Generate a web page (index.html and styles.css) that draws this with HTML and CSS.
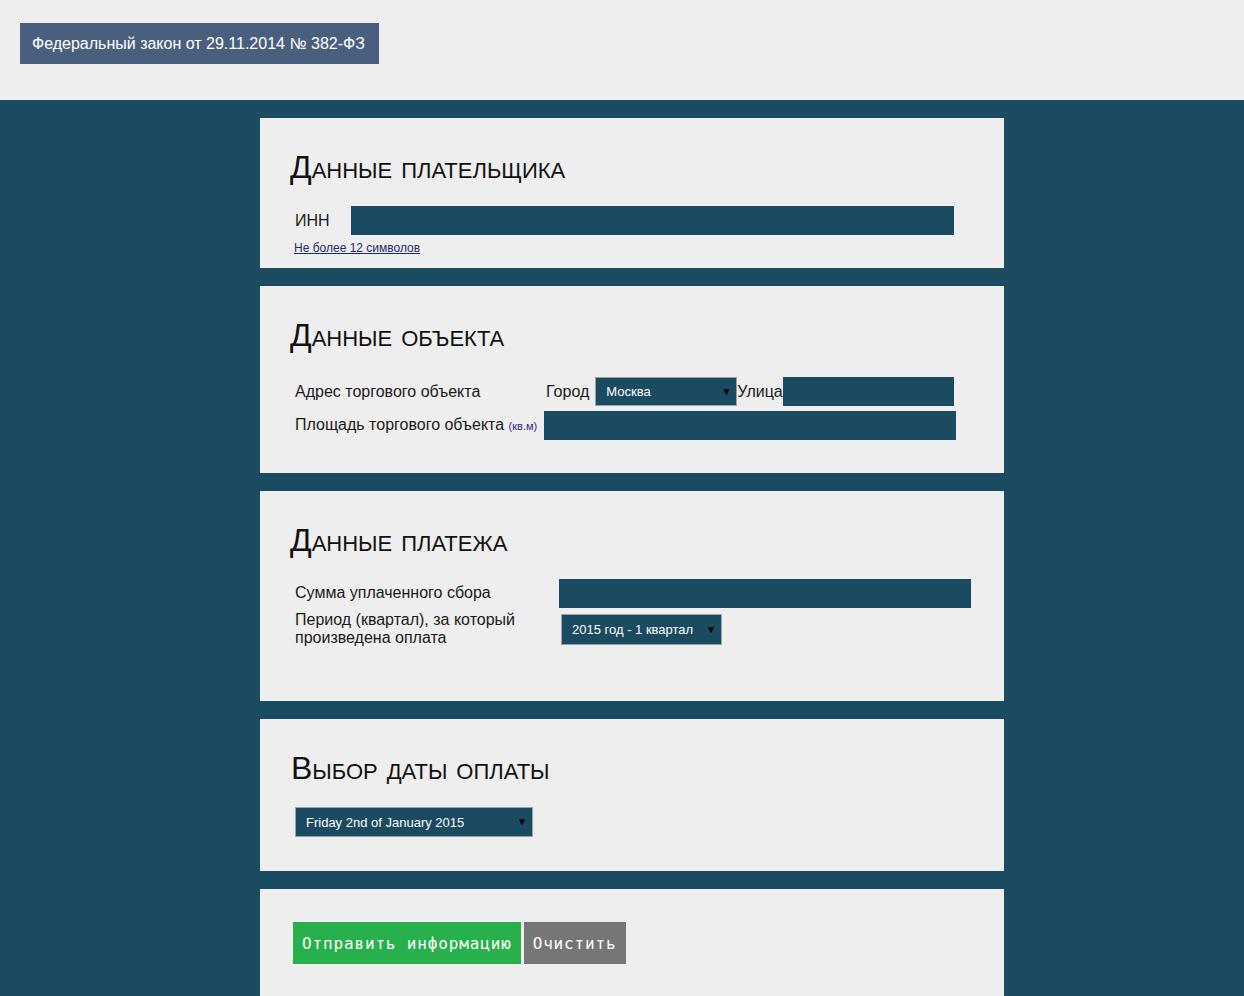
FILE: index.html
```html
<!DOCTYPE html>
<html lang="ru">
<head>
<meta charset="utf-8">
<title>Федеральный закон от 29.11.2014 № 382-ФЗ</title>
<link rel="stylesheet" href="styles.css">
</head>
<body>
<header class="top">
  <div class="law">Федеральный закон от 29.11.2014 № 382-ФЗ</div>
</header>
<main class="main">
  <section class="card card-payer">
    <h2 class="card-title">Данные плательщика</h2>
    <div class="inn-row">
      <label class="label inn-label">ИНН</label>
      <input class="field inn-field" type="text">
    </div>
    <a class="hint" href="#">Не более 12 символов</a>
  </section>

  <section class="card card-object">
    <h2 class="card-title">Данные объекта</h2>
    <div class="form-grid object-grid">
      <div class="label">Адрес торгового объекта</div>
      <div class="address">
        <span class="label city-label">Город</span>
        <span class="select-wrap city-select"><select class="select"><option>Москва</option></select></span>
        <span class="label">Улица</span>
        <input class="field street-field" type="text">
      </div>
      <div class="label">Площадь торгового объекта <span class="unit">(кв.м)</span></div>
      <input class="field wide-field" type="text">
    </div>
  </section>

  <section class="card card-payment">
    <h2 class="card-title">Данные платежа</h2>
    <div class="form-grid payment-grid">
      <div class="label">Сумма уплаченного сбора</div>
      <input class="field wide-field" type="text">
      <div class="label period-label">Период (квартал), за который произведена оплата</div>
      <span class="select-wrap period-select"><select class="select"><option>2015 год - 1 квартал</option></select></span>
    </div>
  </section>

  <section class="card card-date">
    <h2 class="card-title date-title">Выбор даты оплаты</h2>
    <span class="select-wrap date-select"><select class="select"><option>Friday 2nd of January 2015</option></select></span>
  </section>

  <section class="card card-actions">
    <div class="actions">
      <button class="btn btn-send" type="button">Отправить информацию</button>
      <button class="btn btn-clear" type="button">Очистить</button>
    </div>
  </section>
</main>
</body>
</html>
```

FILE: styles.css
```css
* { box-sizing: border-box; }

html, body {
  margin: 0;
  padding: 0;
}

body {
  background: #eeeeee;
  font-family: "Liberation Sans", Arial, sans-serif;
  font-size: 16px;
  color: #1a1a1a;
}

.top {
  height: 100px;
  background: #eeeeee;
  padding: 23px 0 0 20px;
}

.law {
  display: inline-block;
  height: 41px;
  line-height: 41px;
  padding: 0 14px 0 12px;
  background: #4a5f7d;
  color: #ffffff;
  font-size: 16px;
}

.main {
  background: #1b4b60;
  padding: 18px 0 0 260px;
  display: flex;
  flex-direction: column;
  gap: 18px;
  min-height: 896px;
}

.card {
  width: 744px;
  background: #eeeeee;
  padding: 31px 30px 33px 30px;
}

.card-title {
  margin: 0;
  font-size: 32px;
  line-height: 37px;
  font-weight: normal;
  font-variant: small-caps;
  color: #111111;
}

.label {
  font-size: 16px;
  line-height: 18px;
  color: #1a1a1a;
}

.field {
  display: block;
  height: 29px;
  border: none;
  background: #1b4b60;
  color: #ffffff;
  padding: 0 8px;
  font-family: "Liberation Sans", Arial, sans-serif;
  font-size: 14px;
}

/* payer card */
.card-payer { padding-bottom: 13px; }

.inn-row {
  display: flex;
  align-items: center;
  margin-top: 20px;
  padding-left: 5px;
}

.inn-label { width: 56px; }

.inn-field { width: 603px; }

.hint {
  display: block;
  margin-top: 6px;
  padding-left: 4px;
  font-size: 12px;
  line-height: 14px;
  color: #1f2a6b;
  text-decoration: underline;
}

/* grids */
.form-grid {
  display: grid;
  align-items: center;
  padding-left: 5px;
}

.object-grid {
  grid-template-columns: 249px auto;
  row-gap: 5px;
  margin-top: 23px;
}

.address {
  display: flex;
  align-items: center;
}

.city-label { margin: 0 5px 0 2px; }

.city-select { margin-left: 1px; }

.unit {
  font-size: 11px;
  color: #2b2b8c;
}

.street-field { width: 171px; }

.wide-field { width: 412px; }

.payment-grid {
  grid-template-columns: 264px auto;
  row-gap: 6px;
  margin-top: 20px;
  align-items: start;
}

.payment-grid .label:first-child { margin-top: 5px; }

.period-label { margin-top: -3px; }

.card-payment { padding-bottom: 54px; }

/* selects */
.select-wrap {
  position: relative;
  display: inline-block;
}

.select-wrap::after {
  content: "▼";
  position: absolute;
  right: 6px;
  top: 50%;
  transform: translateY(-50%);
  font-size: 10px;
  line-height: 10px;
  color: #000000;
  pointer-events: none;
}

.select {
  appearance: none;
  -webkit-appearance: none;
  display: block;
  width: 100%;
  height: 100%;
  margin: 0;
  border: 1px solid #9aa3a8;
  border-radius: 0;
  background: #1b4b60;
  color: #ffffff;
  font-family: "Liberation Sans", Arial, sans-serif;
  font-size: 13px;
  padding: 0 10px;
}

.city-select { width: 142px; height: 29px; }

.period-select {
  width: 161px;
  height: 31px;
  margin-left: 2px;
}

.date-select {
  width: 238px;
  height: 30px;
  margin: 20px 0 0 5px;
}

.date-title { padding-left: 1px; }

.card-date { padding-top: 31px; padding-bottom: 34px; }

/* actions */
.card-actions { padding-top: 33px; }

.actions {
  display: flex;
  gap: 3px;
  padding-left: 3px;
}

.btn {
  height: 42px;
  border: none;
  padding: 0 9px;
  color: #ffffff;
  font-family: "DejaVu Sans Mono", "Liberation Mono", monospace;
  font-size: 16px;
  letter-spacing: 0.85px;
  cursor: pointer;
}

.btn-send { background: #27b04b; }

.btn-clear { background: #767676; }
```
